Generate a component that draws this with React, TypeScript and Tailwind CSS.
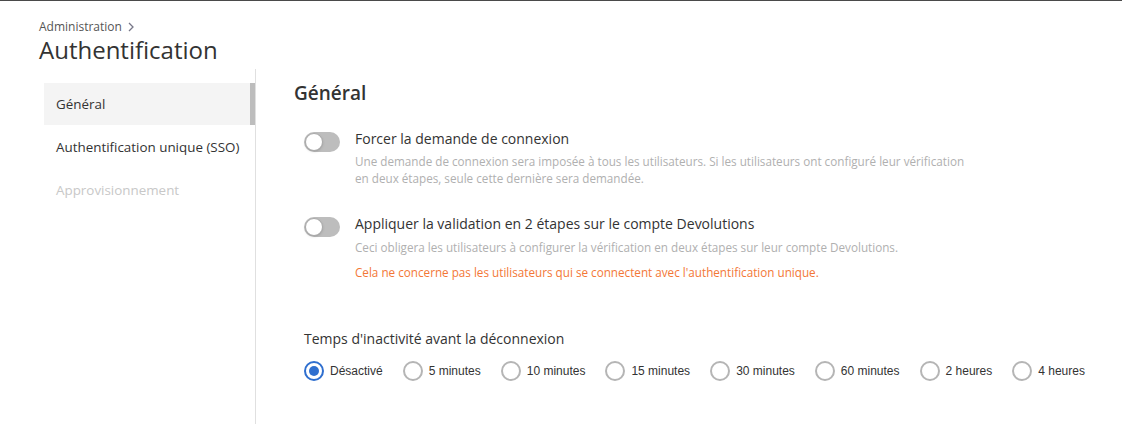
import React, { useState } from "react";

const navItems = [
  { label: "Général", active: true, disabled: false },
  { label: "Authentification unique (SSO)", active: false, disabled: false },
  { label: "Approvisionnement", active: false, disabled: true },
];

const timeouts = [
  "Désactivé",
  "5 minutes",
  "10 minutes",
  "15 minutes",
  "30 minutes",
  "60 minutes",
  "2 heures",
  "4 heures",
];

const Toggle = ({ on, onChange }: { on: boolean; onChange: () => void }) => (
  <button
    onClick={onChange}
    className={`relative w-[36px] h-[20px] shrink-0 rounded-full ${on ? "bg-[#2f6fcf]" : "bg-[#bdbdbd]"}`}
  >
    <span
      className={`absolute top-[1px] w-[18px] h-[18px] rounded-full bg-white border border-[#a8a8a8] shadow-sm ${on ? "left-[17px]" : "left-[1px]"}`}
    />
  </button>
);

const SettingRow = ({
  title,
  children,
}: {
  title: string;
  children: React.ReactNode;
}) => {
  const [on, setOn] = useState(false);
  return (
    <div className="flex items-start pl-[10px]">
      <div className="pt-[3px]">
        <Toggle on={on} onChange={() => setOn(!on)} />
      </div>
      <div className="ml-[15px]">
        <div className="text-[14px] leading-[20px] text-[#333]">{title}</div>
        {children}
      </div>
    </div>
  );
};

export default function App() {
  const [timeout, setTimeoutValue] = useState("Désactivé");

  return (
    <div className="w-full h-[424px] bg-white border-t border-[#4a4a4a] overflow-hidden font-['Open_Sans',sans-serif] text-[#333]">
      {/* HEADER */}
      <div className="pl-[39px] pt-[18px]">
        <div className="flex items-center gap-[5px] text-[12px] leading-[16px] text-[#555]">
          <span>Administration</span>
          <svg width="8" height="10" viewBox="0 0 8 10" className="text-[#778]">
            <path d="M2 1l4 4-4 4" fill="none" stroke="currentColor" strokeWidth="1.3" />
          </svg>
        </div>
        <h1 className="text-[24px] leading-[32px] text-[#333] -mt-[1px]">Authentification</h1>
      </div>

      <div className="flex h-full mt-[3px]">
        {/* SIDEBAR NAV */}
        <div className="w-[256px] shrink-0 border-r border-[#e0e0e0] pl-[44px] pt-[14px] flex flex-col gap-[1px]">
          {navItems.map((item) => (
            <div
              key={item.label}
              className={`h-[42px] flex items-center pl-[12px] pt-[1px] text-[13.4px] ${
                item.active
                  ? "bg-[#f4f4f4] border-r-[5px] border-[#bdbdbd] text-[#333]"
                  : item.disabled
                  ? "text-[#c8c8c8]"
                  : "text-[#333]"
              }`}
            >
              {item.label}
            </div>
          ))}
        </div>

        {/* CONTENT */}
        <div className="flex-1 pl-[38px] pt-[11px]">
          <h2 className="text-[19px] leading-[26px] font-semibold text-[#333]">Général</h2>

          <div className="mt-[23px] flex flex-col gap-[27px]">
            <SettingRow title="Forcer la demande de connexion">
              <p className="mt-[4px] max-w-[620px] text-[11.7px] leading-[17px] text-[#b0b0b0]">
                Une demande de connexion sera imposée à tous les utilisateurs. Si les utilisateurs ont configuré leur vérification en deux étapes, seule cette dernière sera demandée.
              </p>
            </SettingRow>
            <SettingRow title="Appliquer la validation en 2 étapes sur le compte Devolutions">
              <p className="mt-[5px] text-[11.7px] leading-[17px] text-[#b0b0b0]">
                Ceci obligera les utilisateurs à configurer la vérification en deux étapes sur leur compte Devolutions.
              </p>
              <p className="mt-[8px] text-[11.7px] leading-[17px] text-[#f37736]">
                Cela ne concerne pas les utilisateurs qui se connectent avec l'authentification unique.
              </p>
            </SettingRow>
          </div>

          <div className="mt-[48px] pl-[10px]">
            <div className="text-[14px] leading-[20px] text-[#333]">Temps d'inactivité avant la déconnexion</div>
            <div className="mt-[12px] flex items-center gap-[20px] font-['Liberation_Sans',Arial,sans-serif] text-[12px] text-[#333]">
              {timeouts.map((t) => {
                const selected = timeout === t;
                return (
                  <label key={t} className="flex items-center gap-[6px] cursor-pointer" onClick={() => setTimeoutValue(t)}>
                    <span
                      className={`w-[20px] h-[20px] rounded-full border-2 flex items-center justify-center ${
                        selected ? "border-[#2f6fcf]" : "border-[#b5b5b5]"
                      }`}
                    >
                      {selected && <span className="w-[10px] h-[10px] rounded-full bg-[#2f6fcf]" />}
                    </span>
                    <span>{t}</span>
                  </label>
                );
              })}
            </div>
          </div>
        </div>
      </div>
    </div>
  );
}
